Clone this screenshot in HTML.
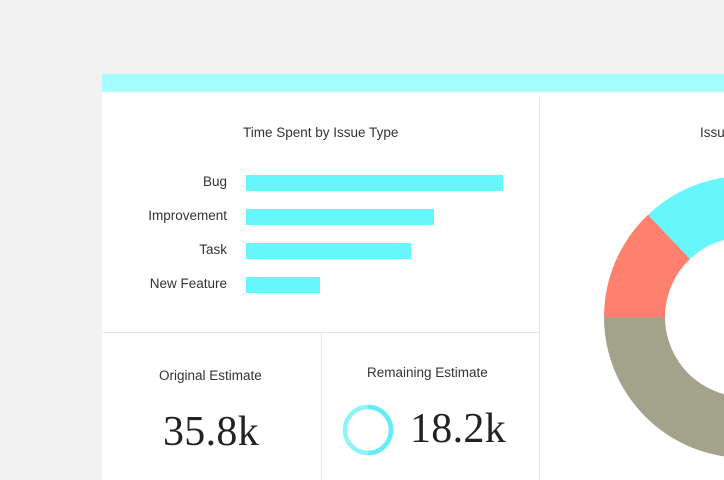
<!DOCTYPE html>
<html><head><style>
body{margin:0;width:724px;height:480px;overflow:hidden;background:#f2f2f2;font-family:"Liberation Sans",sans-serif;color:#333;position:relative}
.a{position:absolute}
.lbl{position:absolute;font-size:13.5px;text-align:right;width:125px;left:102px}
.bar{position:absolute;left:246px;height:16px;background:#66f7fc}
.num{position:absolute;font-family:"Liberation Serif",serif;font-size:42px;color:#222;letter-spacing:0.3px}
</style></head><body>
<div class="a" style="left:102px;top:74px;width:622px;height:18px;background:#a6fdfd"></div>
<div class="a" style="left:102px;top:92px;width:622px;height:388px;background:#fff;overflow:hidden">
<div class="a" style="left:598px;top:33px;font-size:13.5px;white-space:nowrap">Issue Types</div>
</div>
<div class="a" style="left:539px;top:98px;width:1px;height:382px;background:#e6e6e6"></div>
<div class="a" style="left:103px;top:332px;width:436px;height:1px;background:#e6e6e6"></div>
<div class="a" style="left:321px;top:333px;width:1px;height:147px;background:#e6e6e6"></div>
<div class="a" style="left:243px;top:125px;font-size:13.5px">Time Spent by Issue Type</div>
<div class="lbl" style="top:174px">Bug</div>
<div class="lbl" style="top:208px">Improvement</div>
<div class="lbl" style="top:242px">Task</div>
<div class="lbl" style="top:276px">New Feature</div>
<div class="bar" style="top:175px;width:257px"></div>
<div class="bar" style="top:209px;width:188px"></div>
<div class="bar" style="top:243px;width:165px"></div>
<div class="bar" style="top:277px;width:74px"></div>
<div class="a" style="left:159px;top:368px;font-size:13.5px">Original Estimate</div>
<div class="a" style="left:367px;top:365px;font-size:13.5px">Remaining Estimate</div>
<div class="num" style="left:163px;top:408px">35.8k</div>
<div class="num" style="left:410px;top:405px">18.2k</div>
<svg class="a" style="left:0;top:0" width="724" height="480">
<circle cx="368" cy="430" r="23" fill="none" stroke="#8ef3f8" stroke-width="4.5"/>
<path d="M368 407 A23 23 0 0 1 368 453" fill="none" stroke="#66ecf6" stroke-width="4.5"/>
<g transform="translate(745,317)">
<path d="M-141 0 A141 141 0 0 1 -97 -102.3 L-55 -58 A80 80 0 0 0 -80 0Z" fill="#fe806e"/>
<path d="M-97 -102.3 A141 141 0 0 1 141 0 L80 0 A80 80 0 0 0 -55 -58Z" fill="#66f6fc"/>
<path d="M-141 0 A141 141 0 0 0 141 0 L80 0 A80 80 0 0 1 -80 0Z" fill="#a3a28a"/>
</g>
</svg>
</body></html>
